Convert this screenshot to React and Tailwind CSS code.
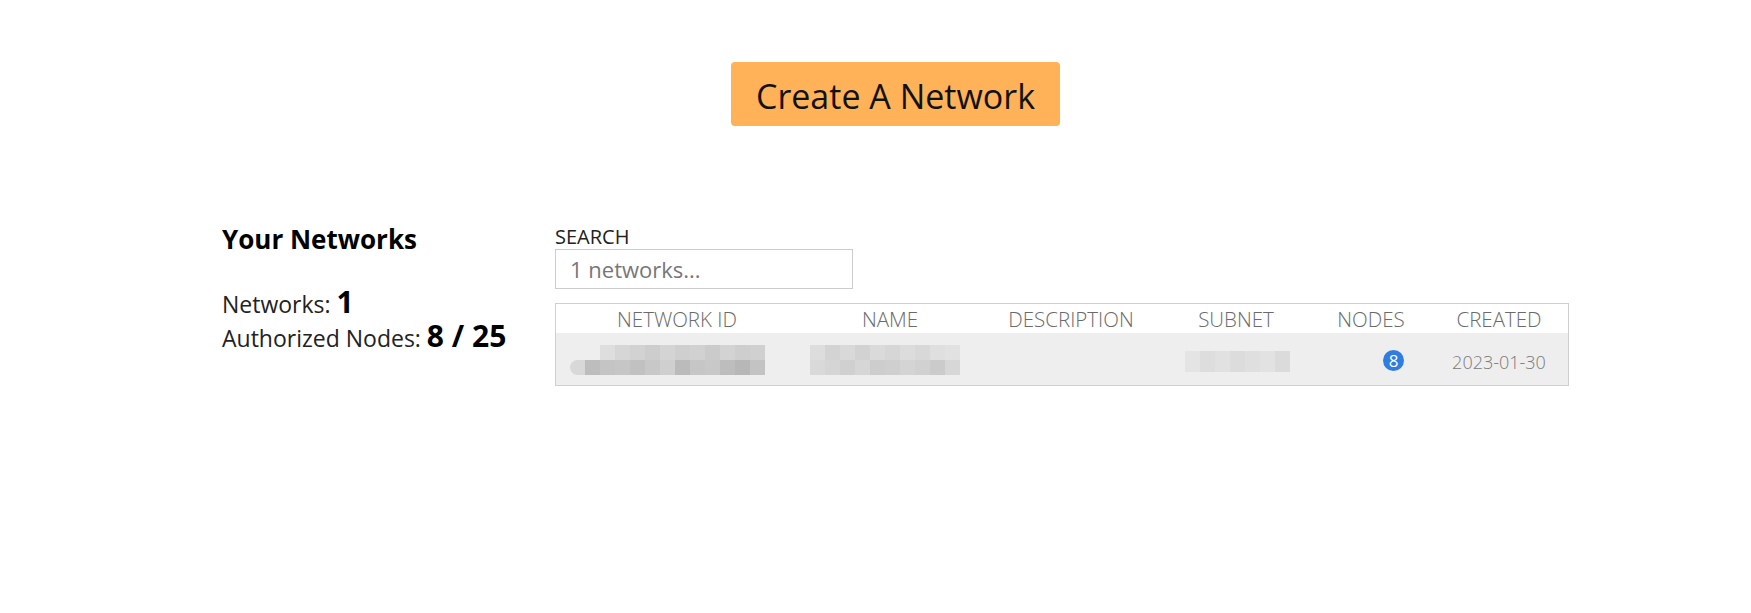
import React from "react";

const idTop = ["#dedede", "#d6d6d6", "#d2d2d2", "#cdcdcd", "#d4d4d4", "#cfcfcf", "#d1d1d1", "#cbcbcb", "#d3d3d3", "#cecece", "#d0d0d0"];
const idBottom = ["#d8d8d8", "#bdbdbd", "#c4c4c4", "#c6c6c6", "#c1c1c1", "#c8c8c8", "#cfcfcf", "#bbbbbb", "#c6c6c6", "#c8c8c8", "#bdbdbd", "#b7b7b7", "#c3c3c3"];
const nameTop = ["#dddddd", "#d3d3d3", "#d9d9d9", "#d2d2d2", "#dadada", "#d6d6d6", "#dcdcdc", "#d8d8d8", "#dfdfdf", "#e1e1e1"];
const nameBottom = ["#d9d9d9", "#d5d5d5", "#d0d0d0", "#d6d6d6", "#cdcdcd", "#cfcfcf", "#d4d4d4", "#d1d1d1", "#cbcbcb", "#d7d7d7"];
const subnet = ["#e4e4e4", "#dddddd", "#e1e1e1", "#dcdcdc", "#dfdfdf", "#e2e2e2", "#dbdbdb"];

function Blocks({ colors, w = 15, h = 15 }) {
  return (
    <div className="flex">
      {colors.map((c, i) => (
        <div key={i} style={{ backgroundColor: c, width: w, height: h }} />
      ))}
    </div>
  );
}

export default function App() {
  const font = { fontFamily: '"Open Sans", "Noto Sans", sans-serif' };
  return (
    <div className="w-[1751px] h-[613px] bg-white text-black" style={font}>
      <div className="pl-[40px] pt-[62px] flex justify-center">
        <button className="w-[329px] h-[64px] rounded-[4px] bg-[#ffb257] flex items-center justify-center pt-[3px] text-[34px] leading-none text-[#111]">
          Create A Network
        </button>
      </div>

      <div className="flex pl-[222px] pt-[97px]">
        <div className="w-[333px] shrink-0">
          <div className="text-[26px] leading-[32px] font-bold">Your Networks</div>
          <div className="mt-[32px] text-[23px] leading-[34px] text-[#222]">
            <div>
              Networks: <span className="text-[30px] leading-[26px] font-bold text-black">1</span>
            </div>
            <div>
              Authorized Nodes: <span className="text-[30px] leading-[26px] font-bold text-black">8 / 25</span>
            </div>
          </div>
        </div>

        <div className="w-[1014px] shrink-0">
          <div className="mt-[2px] text-[20px] leading-[24px] text-[#222]">SEARCH</div>
          <input
            className="block w-[298px] h-[40px] border border-[#cccccc] pl-[14px] text-[22px] outline-none placeholder:text-[#777]"
            placeholder="1 networks..."
          />
          <div className="mt-[14px] border border-[#cfcfcf]">
            <div className="grid grid-cols-[242px_184px_178px_152px_118px_138px] h-[29px] pt-[2px] text-[20.5px] leading-[26px] font-light text-[#6a6a6a] text-center">
              <div>NETWORK ID</div>
              <div>NAME</div>
              <div>DESCRIPTION</div>
              <div>SUBNET</div>
              <div>NODES</div>
              <div>CREATED</div>
            </div>
            <div className="grid grid-cols-[242px_184px_178px_152px_118px_138px] h-[52px] bg-[#eeeeee] items-center">
              <div className="pl-[14px] pt-[1px]">
                <div className="pl-[30px]">
                  <Blocks colors={idTop} />
                </div>
                <div className="rounded-l-full overflow-hidden w-fit">
                  <Blocks colors={idBottom} />
                </div>
              </div>
              <div className="pl-[12px] pt-[1px]">
                <Blocks colors={nameTop} />
                <Blocks colors={nameBottom} />
              </div>
              <div />
              <div className="pl-[25px] pt-[4px]">
                <Blocks colors={subnet} h={21} />
              </div>
              <div className="flex justify-end pr-[26px] pt-[3px]">
                <span className="w-[21px] h-[21px] rounded-full bg-[#2f7de1] text-white text-[17px] leading-[21px] text-center">
                  8
                </span>
              </div>
              <div className="text-center text-[18px] text-[#7a7a7a] pt-[6px] font-light">2023-01-30</div>
            </div>
          </div>
        </div>
      </div>
    </div>
  );
}
